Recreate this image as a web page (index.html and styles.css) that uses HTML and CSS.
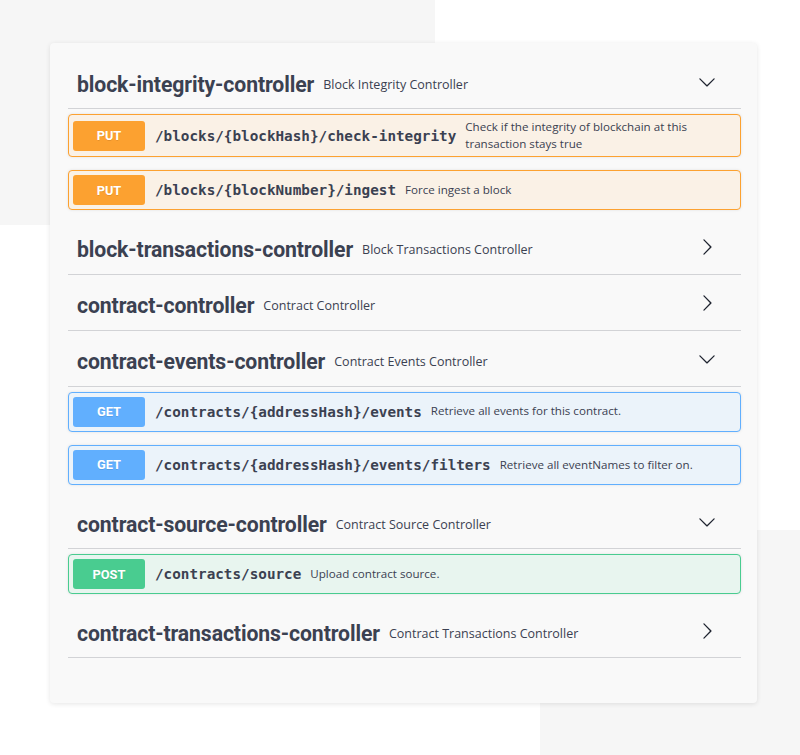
FILE: index.html
```html
<!DOCTYPE html>
<html lang="en">
<head>
<meta charset="utf-8">
<title>API operations</title>
<link rel="stylesheet" href="styles.css">
</head>
<body>
<main class="card">

  <section class="tag-section">
    <h3 class="tag">
      <span class="tag-name">block-integrity-controller</span>
      <small class="tag-desc">Block Integrity Controller</small>
      <svg class="arrow" viewBox="0 0 20 20" width="18" height="18"><path d="M17.418 6.109c.272-.268.709-.268.979 0s.271.701 0 .969l-7.908 7.83c-.27.268-.707.268-.979 0l-7.908-7.83c-.27-.268-.27-.701 0-.969.271-.268.709-.268.979 0L10 13.25l7.418-7.141z"/></svg>
    </h3>
    <div class="op op-put">
      <span class="method">PUT</span>
      <span class="path">/blocks/{blockHash}/check-integrity</span>
      <div class="desc">Check if the integrity of blockchain at this transaction stays true</div>
    </div>
    <div class="op op-put">
      <span class="method">PUT</span>
      <span class="path">/blocks/{blockNumber}/ingest</span>
      <div class="desc">Force ingest a block</div>
    </div>
  </section>

  <section class="tag-section">
    <h3 class="tag">
      <span class="tag-name">block-transactions-controller</span>
      <small class="tag-desc">Block Transactions Controller</small>
      <svg class="arrow collapsed" viewBox="0 0 20 20" width="18" height="18"><path d="M17.418 6.109c.272-.268.709-.268.979 0s.271.701 0 .969l-7.908 7.83c-.27.268-.707.268-.979 0l-7.908-7.83c-.27-.268-.27-.701 0-.969.271-.268.709-.268.979 0L10 13.25l7.418-7.141z"/></svg>
    </h3>
  </section>

  <section class="tag-section">
    <h3 class="tag">
      <span class="tag-name">contract-controller</span>
      <small class="tag-desc">Contract Controller</small>
      <svg class="arrow collapsed" viewBox="0 0 20 20" width="18" height="18"><path d="M17.418 6.109c.272-.268.709-.268.979 0s.271.701 0 .969l-7.908 7.83c-.27.268-.707.268-.979 0l-7.908-7.83c-.27-.268-.27-.701 0-.969.271-.268.709-.268.979 0L10 13.25l7.418-7.141z"/></svg>
    </h3>
  </section>

  <section class="tag-section">
    <h3 class="tag">
      <span class="tag-name">contract-events-controller</span>
      <small class="tag-desc">Contract Events Controller</small>
      <svg class="arrow" viewBox="0 0 20 20" width="18" height="18"><path d="M17.418 6.109c.272-.268.709-.268.979 0s.271.701 0 .969l-7.908 7.83c-.27.268-.707.268-.979 0l-7.908-7.83c-.27-.268-.27-.701 0-.969.271-.268.709-.268.979 0L10 13.25l7.418-7.141z"/></svg>
    </h3>
    <div class="op op-get">
      <span class="method">GET</span>
      <span class="path">/contracts/{addressHash}/events</span>
      <div class="desc">Retrieve all events for this contract.</div>
    </div>
    <div class="op op-get">
      <span class="method">GET</span>
      <span class="path">/contracts/{addressHash}/events/filters</span>
      <div class="desc">Retrieve all eventNames to filter on.</div>
    </div>
  </section>

  <section class="tag-section">
    <h3 class="tag">
      <span class="tag-name">contract-source-controller</span>
      <small class="tag-desc">Contract Source Controller</small>
      <svg class="arrow" viewBox="0 0 20 20" width="18" height="18"><path d="M17.418 6.109c.272-.268.709-.268.979 0s.271.701 0 .969l-7.908 7.83c-.27.268-.707.268-.979 0l-7.908-7.83c-.27-.268-.27-.701 0-.969.271-.268.709-.268.979 0L10 13.25l7.418-7.141z"/></svg>
    </h3>
    <div class="op op-post">
      <span class="method">POST</span>
      <span class="path">/contracts/source</span>
      <div class="desc">Upload contract source.</div>
    </div>
  </section>

  <section class="tag-section">
    <h3 class="tag">
      <span class="tag-name">contract-transactions-controller</span>
      <small class="tag-desc">Contract Transactions Controller</small>
      <svg class="arrow collapsed" viewBox="0 0 20 20" width="18" height="18"><path d="M17.418 6.109c.272-.268.709-.268.979 0s.271.701 0 .969l-7.908 7.83c-.27.268-.707.268-.979 0l-7.908-7.83c-.27-.268-.27-.701 0-.969.271-.268.709-.268.979 0L10 13.25l7.418-7.141z"/></svg>
    </h3>
  </section>

</main>
</body>
</html>
```

FILE: styles.css
```css
html, body {
  margin: 0;
  padding: 0;
}

body {
  width: 800px;
  min-height: 755px;
  background:
    linear-gradient(#f6f6f6, #f6f6f6) 0 0 / 435px 225px no-repeat,
    linear-gradient(#f6f6f6, #f6f6f6) 540px 530px / 260px 225px no-repeat,
    #ffffff;
  color: #3b4151;
  font-family: "Open Sans", "Noto Sans", sans-serif;
  overflow: hidden;
}

.card {
  display: block;
  box-sizing: border-box;
  width: 707px;
  margin: 43px 0 0 50px;
  padding: 15px 16px 40px 18px;
  background: #f9f9f9;
  border-radius: 4px;
  box-shadow: 0 1px 5px rgba(0, 0, 0, 0.10);
}

.tag {
  display: flex;
  align-items: center;
  box-sizing: border-box;
  height: 51px;
  margin: 0 0 5px;
  padding: 2px 25px 0 9px;
  border-bottom: 1px solid #d2d3d6;
  font-weight: normal;
}

.tag-name {
  font-family: Roboto, "Open Sans", sans-serif;
  font-weight: 700;
  font-size: 21.2px;
  letter-spacing: -0.1px;
  color: #3b4151;
  white-space: nowrap;
}

.tag-desc {
  flex: 1;
  padding: 0 9px;
  font-family: "Open Sans", sans-serif;
  font-size: 12.5px;
  color: #3b4151;
  white-space: nowrap;
}

.arrow {
  flex-shrink: 0;
  fill: #1f2430;
  margin-top: -5px;
}

.arrow.collapsed {
  transform: rotate(-90deg);
}

.op {
  display: flex;
  align-items: center;
  margin: 0 0 13.25px;
  padding: 4px;
  border: 1px solid;
  border-radius: 4px;
  box-shadow: 0 0 3px rgba(0, 0, 0, 0.1);
}

.method {
  flex-shrink: 0;
  display: flex;
  align-items: center;
  justify-content: center;
  width: 72px;
  height: 30px;
  border-radius: 3px;
  font-family: Roboto, "Open Sans", sans-serif;
  font-weight: 700;
  font-size: 12.8px;
  color: #ffffff;
  text-shadow: 0 1px 0 rgba(0, 0, 0, 0.1);
}

.path {
  padding: 0 9px 0 10px;
  font-family: "DejaVu Sans Mono", "Liberation Mono", monospace;
  font-weight: 700;
  font-size: 14.3px;
  color: #3b4151;
  white-space: nowrap;
}

.desc {
  flex: 1;
  font-family: "Open Sans", sans-serif;
  font-size: 11.6px;
  line-height: 16.5px;
  color: #3b4151;
}

.op-put {
  border-color: #fca130;
  background: #faf1e6;
}
.op-put .method {
  background: #fca130;
}

.op-get {
  border-color: #61affe;
  background: #ebf3fa;
}
.op-get .method {
  background: #61affe;
}

.op-post {
  border-color: #49cc90;
  background: #e8f5ef;
}
.op-post .method {
  background: #49cc90;
}
```
